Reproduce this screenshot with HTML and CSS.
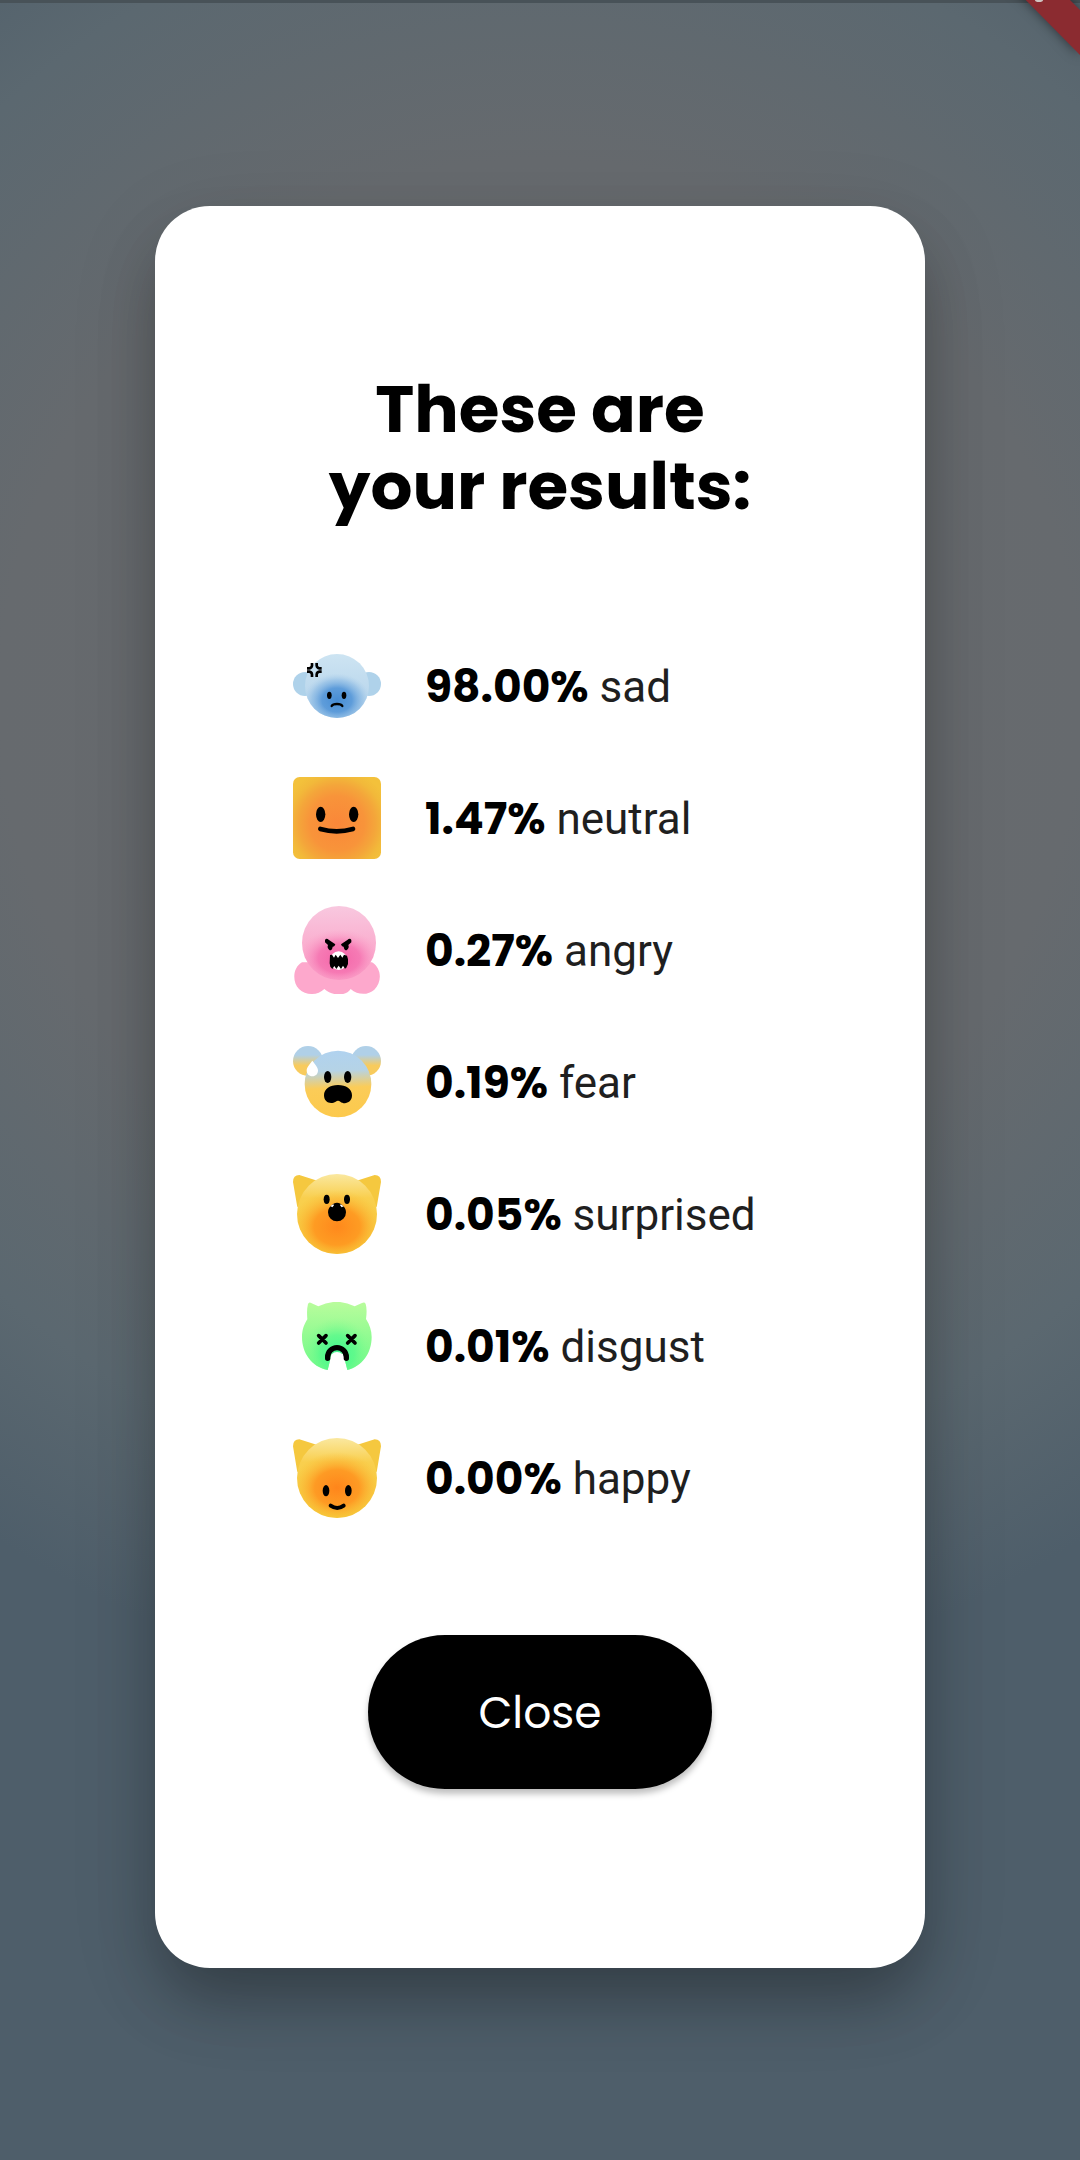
FILE: index.html
```html
<!DOCTYPE html>
<html lang="en">
<head>
<meta charset="utf-8">
<meta name="viewport" content="width=device-width, initial-scale=1">
<title>Results</title>
<link rel="stylesheet" href="styles.css">
</head>
<body class="page">
<svg class="ribbon" viewBox="0 0 80 80" aria-hidden="true">
  <path class="ribbon-band" d="M26-20 6-20 80 55V10L50-20z"/>
  <ellipse class="ribbon-mark" cx="39" cy="0" rx="4" ry="2"/>
</svg>
<main class="card">
  <h1 class="title">These are<br>your results:</h1>
  <ul class="results">
    <li class="result">
      <svg class="face" viewBox="39 6 264 264" aria-hidden="true">
        <defs>
          <linearGradient id="sadBase" x1="0" y1="0" x2="0" y2="1"><stop offset="0" stop-color="#cde4f2"/><stop offset="1" stop-color="#b0d0ea"/></linearGradient>
          <radialGradient id="sadGlow" gradientUnits="userSpaceOnUse" cx="171" cy="180" r="100" gradientTransform="translate(0 36) scale(1 .8)"><stop offset="0" stop-color="#478dd4"/><stop offset=".45" stop-color="#5496d8" stop-opacity=".9"/><stop offset=".75" stop-color="#7db1e1" stop-opacity=".5"/><stop offset="1" stop-color="#a8cce9" stop-opacity="0"/></radialGradient>
        </defs>
        <circle cx="75" cy="132" r="36" fill="#afd2ea"/><circle cx="267" cy="132" r="36" fill="#afd2ea"/>
        <circle cx="171" cy="138" r="96" fill="url(#sadBase)"/><circle cx="171" cy="138" r="96" fill="url(#sadGlow)"/>
        <path d="M96 69v8q-1 7-8 8h-7M110 69v8q1 7 8 8h7M81 95h7q7 1 8 8v8M125 95h-7q-7 1-8 8v8" fill="none" stroke="#000" stroke-width="8"/>
        <ellipse cx="148" cy="166" rx="7" ry="11"/><ellipse cx="192" cy="166" rx="7" ry="11"/>
        <path d="M155 198q3-6 16-6t16 6" fill="none" stroke="#000" stroke-width="7" stroke-linecap="round"/>
      </svg>
      <span class="text"><strong class="percent">98.00%</strong> sad</span>
    </li>
    <li class="result">
      <svg class="face" viewBox="39 27 264 264" aria-hidden="true">
        <defs><radialGradient id="neutralGlow" gradientUnits="userSpaceOnUse" cx="171" cy="175" r="165"><stop offset="0" stop-color="#fa8739"/><stop offset=".5" stop-color="#f8943a"/><stop offset=".7" stop-color="#f4a63a"/><stop offset=".86" stop-color="#f2b93a"/><stop offset="1" stop-color="#f3c13b"/></radialGradient></defs>
        <rect x="39" y="36" width="264" height="246" rx="20" fill="url(#neutralGlow)"/>
        <ellipse cx="122" cy="148" rx="14" ry="23"/><ellipse cx="221" cy="148" rx="14" ry="23"/>
        <path d="M121 192q49 14 98 0" fill="none" stroke="#000" stroke-width="14" stroke-linecap="round"/>
      </svg>
      <span class="text"><strong class="percent">1.47%</strong> neutral</span>
    </li>
    <li class="result">
      <svg class="face" viewBox="39 33 264 264" aria-hidden="true">
        <defs>
          <linearGradient id="angryBase" x1="0" y1="0" x2="0" y2="1"><stop offset="0" stop-color="#f8c8df"/><stop offset=".5" stop-color="#fab0d0"/><stop offset="1" stop-color="#fba4ca"/></linearGradient>
          <radialGradient id="angryGlow" gradientUnits="userSpaceOnUse" cx="177" cy="190" r="125" gradientTransform="translate(0 57) scale(1 .7)"><stop offset="0" stop-color="#f464a8"/><stop offset=".5" stop-color="#f56eae" stop-opacity=".8"/><stop offset="1" stop-color="#fba4ca" stop-opacity="0"/></radialGradient>
        </defs>
        <path d="M66 202C38 218 36 260 57 282c22 21 57 19 76 0 25 22 65 22 79 0 22 19 52 19 71 2 24-24 22-64-7-82z" fill="#fda8cc"/>
        <circle cx="177" cy="144" r="111" fill="url(#angryBase)"/><circle cx="177" cy="144" r="111" fill="url(#angryGlow)"/>
        <path d="M135 135q4-7 12 0l19 13q-2 8-8 7-1 11-9 11-9-7-5-16l-9-8zM214 135q-4-7-12 0l-19 13q2 8 8 7 1 11 9 11 9-7 5-16l9-8z"/>
        <ellipse cx="176" cy="197" rx="26" ry="28" fill="#fff"/>
        <path d="M150 180l6-1 6 9 5-9 7 10 7-10 6 9 5-9 9 3 3 11v14l-5 11-4 3-6-9-6 10-7-10-7 10-6-9-6 9-6-7-2-10z"/>
      </svg>
      <span class="text"><strong class="percent">0.27%</strong> angry</span>
    </li>
    <li class="result">
      <svg class="face" viewBox="39 9 264 264" aria-hidden="true">
        <defs>
          <linearGradient id="fearFace" gradientUnits="userSpaceOnUse" x1="165" y1="47" x2="174" y2="247"><stop offset="0" stop-color="#b0d2ef"/><stop offset=".3" stop-color="#b5d3e6"/><stop offset=".56" stop-color="#fbcc58"/><stop offset="1" stop-color="#fcc94c"/></linearGradient>
          <linearGradient id="fearEar" x1="0" y1="0" x2="0" y2="1"><stop offset=".3" stop-color="#b0d0e8"/><stop offset=".65" stop-color="#f8cb5d"/></linearGradient>
        </defs>
        <circle cx="84" cy="78" r="45" fill="url(#fearEar)"/><circle cx="258" cy="78" r="45" fill="url(#fearEar)"/>
        <circle cx="174" cy="147" r="100" fill="url(#fearFace)"/>
        <path d="M97 77c6 8 17 20 17 29 0 11-7 18-17 18s-17-7-17-18c0-9 11-21 17-29z" fill="#fff"/>
        <ellipse cx="143" cy="126" rx="11" ry="18"/><ellipse cx="203" cy="126" rx="11" ry="18"/>
        <path d="M132 181c0-20 18-31 42-31s42 11 42 31c0 24-24 28-35 19q-7-5-14 0c-13 9-35 4-35-19z"/>
      </svg>
      <span class="text"><strong class="percent">0.19%</strong> fear</span>
    </li>
    <li class="result">
      <svg class="face" viewBox="39 30 264 264" aria-hidden="true">
        <defs>
          <linearGradient id="catBase" x1="0" y1="0" x2="0" y2="1"><stop offset="0" stop-color="#fae8a0"/><stop offset=".3" stop-color="#f9cf4e"/><stop offset="1" stop-color="#f5cf3d"/></linearGradient>
          <radialGradient id="surprisedGlow" gradientUnits="userSpaceOnUse" cx="171" cy="200" r="138" gradientTransform="translate(0 40) scale(1 .8)"><stop offset="0" stop-color="#ff881c"/><stop offset=".5" stop-color="#ff961f" stop-opacity=".9"/><stop offset="1" stop-color="#fabd35" stop-opacity="0"/></radialGradient>
        </defs>
        <path d="M52 142 39 66Q39 45 58 45L112 62zM290 142 303 66Q303 45 284 45L230 62z" fill="#f5c83f"/>
        <circle cx="171" cy="162" r="120" fill="url(#catBase)"/><circle cx="171" cy="162" r="120" fill="url(#surprisedGlow)"/>
        <ellipse cx="140" cy="118" rx="9" ry="14"/><ellipse cx="201" cy="118" rx="9" ry="14"/>
        <path d="M171 128c7 0 12 3 15 7 7 5 12 12 12 22a27 27 0 0 1-54 0c0-10 5-17 12-22 3-4 8-7 15-7z"/>
        <path d="M151 138l9-5 2 3-5 6zM180 136l2-3 9 6-6 3z" fill="#fff"/>
      </svg>
      <span class="text"><strong class="percent">0.05%</strong> surprised</span>
    </li>
    <li class="result">
      <svg class="face" viewBox="39 36 264 264" aria-hidden="true">
        <defs>
          <linearGradient id="disgustBase" x1="0" y1="0" x2="0" y2="1"><stop offset="0" stop-color="#b9fc9c"/><stop offset=".5" stop-color="#92fb92"/><stop offset="1" stop-color="#71fa88"/></linearGradient>
          <radialGradient id="disgustGlow" gradientUnits="userSpaceOnUse" cx="171" cy="188" r="105"><stop offset="0" stop-color="#43f792"/><stop offset=".5" stop-color="#55f98b" stop-opacity=".75"/><stop offset="1" stop-color="#8afb90" stop-opacity="0"/></radialGradient>
        </defs>
        <path id="disgustHead" d="M143 240C94 230 66 188 66 141c0-22 7-39 16-53-1-16-2-31 2-46q3-8 11-2l20 9q55-27 109 0l22-10q8-4 11 3 5 16 1 45c11 17 17 35 17 54 0 49-29 88-73 99l-12-49h-35z" fill="url(#disgustBase)"/>
        <path d="M143 240C94 230 66 188 66 141c0-22 7-39 16-53-1-16-2-31 2-46q3-8 11-2l20 9q55-27 109 0l22-10q8-4 11 3 5 16 1 45c11 17 17 35 17 54 0 49-29 88-73 99l-12-49h-35z" fill="url(#disgustGlow)"/>
        <path d="M116 137l22 22m0-22-22 22M203 137l22 22m0-22-22 22" stroke="#000" stroke-width="11" stroke-linecap="round"/>
        <path d="M151 210q1-24 20-24t20 24v14h-40z" fill="#fff"/>
        <path d="M143 205v-4a28 28 0 0 1 56 0v4" fill="none" stroke="#000" stroke-width="16" stroke-linecap="round"/>
      </svg>
      <span class="text"><strong class="percent">0.01%</strong> disgust</span>
    </li>
    <li class="result">
      <svg class="face" viewBox="39 27 264 264" aria-hidden="true">
        <defs><radialGradient id="happyGlow" gradientUnits="userSpaceOnUse" cx="171" cy="188" r="134" gradientTransform="translate(0 38) scale(1 .8)"><stop offset="0" stop-color="#ff851b"/><stop offset=".5" stop-color="#ff9520" stop-opacity=".9"/><stop offset="1" stop-color="#fabd35" stop-opacity="0"/></radialGradient></defs>
        <path d="M52 142 39 64Q39 43 58 43L112 60zM290 142 303 64Q303 43 284 43L230 60z" fill="#f5c83f"/>
        <circle cx="171" cy="159" r="120" fill="url(#catBase)"/><circle cx="171" cy="159" r="120" fill="url(#happyGlow)"/>
        <ellipse cx="138" cy="197" rx="10" ry="17"/><ellipse cx="205" cy="197" rx="10" ry="17"/>
        <path d="M152 242q20 14 39 0" fill="none" stroke="#000" stroke-width="12" stroke-linecap="round"/>
      </svg>
      <span class="text"><strong class="percent">0.00%</strong> happy</span>
    </li>
  </ul>
  <button class="close" type="button">Close</button>
</main>
</body>
</html>
```

FILE: styles.css
```css
* {
  box-sizing: border-box;
}

.page {
  margin: 0;
  min-height: 100vh;
  padding: 202px 155px 192px;
  border-top: 3px solid #485258;
  display: flex;
  align-items: center;
  justify-content: center;
  background: radial-gradient(circle 1000px at 50% 700px, #6a6b6e 0%, #666a6e 54%, #5b6870 80%, #4e5e6a 100%) #4e5e6a;
  font-family: Roboto, sans-serif;
  color: #1f1f1f;
}

.ribbon {
  position: absolute;
  top: 0;
  right: 0;
  width: 80px;
  height: 80px;
}

.ribbon-band {
  fill: #8b2b30;
  filter: drop-shadow(0 0 6px rgba(0, 0, 0, 0.5));
}

.ribbon-mark {
  fill: #cfc4c2;
}

.card {
  flex: 1;
  display: flex;
  flex-direction: column;
  align-items: center;
  padding: 165px 44px 179px;
  border-radius: 55px;
  background: #fff;
  box-shadow: 0 36px 60px -6px rgba(0, 0, 0, 0.26), 0 24px 90px rgba(0, 0, 0, 0.12);
}

.title {
  margin: 0 0 117px;
  font: 700 66px/77px Poppins, Inter, sans-serif;
  color: #000;
  text-align: center;
}

.results {
  align-self: stretch;
  display: flex;
  flex-direction: column;
  gap: 44px;
  margin: 0 0 113px;
  padding: 0 0 0 94px;
  list-style: none;
}

.result {
  display: flex;
  align-items: center;
  gap: 44px;
}

.face {
  flex: none;
  width: 88px;
  height: 88px;
}

.text {
  padding-top: 2px;
  font-size: 44px;
  line-height: 66px;
  white-space: nowrap;
}

.percent {
  font-family: Poppins, Inter, sans-serif;
  font-weight: 700;
  color: #000;
}

.close {
  padding: 45px 110px 43px;
  border: 0;
  border-radius: 77px;
  background: #000;
  color: #fff;
  font: 400 44px/66px Poppins, Inter, sans-serif;
  box-shadow: 0 5px 6px rgba(0, 0, 0, 0.25);
}
```
